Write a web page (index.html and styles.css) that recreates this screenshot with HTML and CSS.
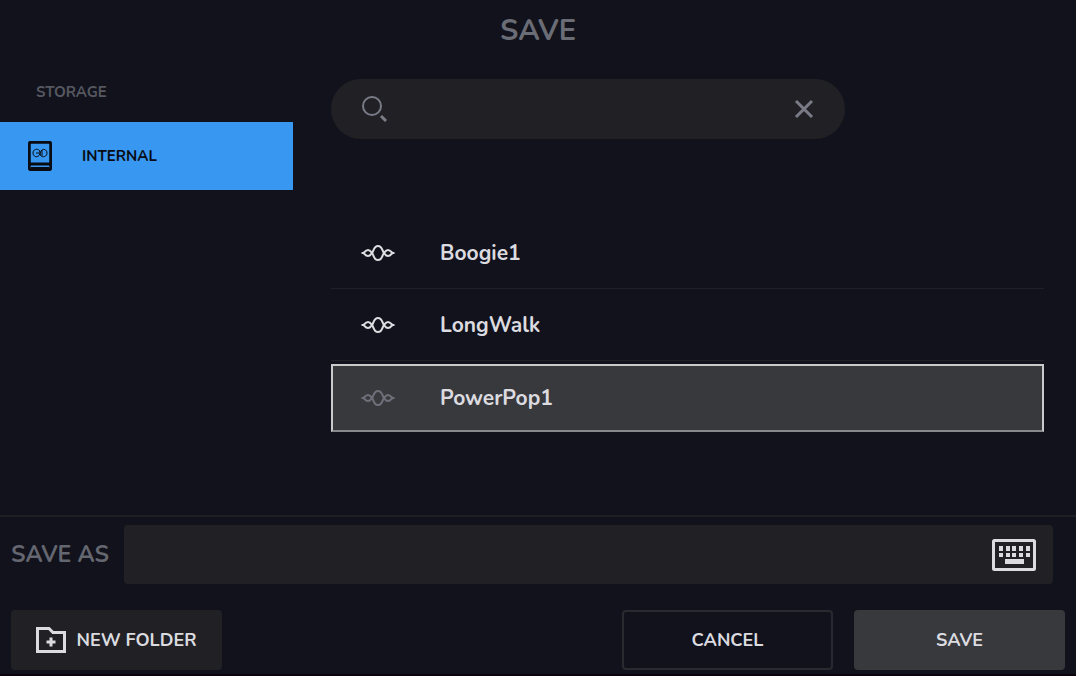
FILE: index.html
```html
<!DOCTYPE html>
<html lang="en">
<head>
  <meta charset="UTF-8" />
  <meta name="viewport" content="width=device-width, initial-scale=1" />
  <title>Save</title>
  <link rel="stylesheet" href="styles.css">
</head>
<body>

  <!-- shared wave icon -->
  <svg class="sprite" aria-hidden="true">
    <symbol id="wave" viewBox="0 0 34 18">
      <path d="M0.500 9H2.500M31.500 9H33.500M2.500 9C4 7.500 5 6 7 6C9.500 6 10 8 11 9C10 10 9.500 12 7 12C5 12 4 10.500 2.500 9ZM31.500 9C30 7.500 29 6 27 6C24.500 6 24 8 23 9C24 10 24.500 12 27 12C29 12 30 10.500 31.500 9ZM11 9C13 7 12.500 2 17 2C21.500 2 21 7 23 9C21 11 21.500 16 17 16C12.500 16 13 11 11 9Z"/>
    </symbol>
  </svg>

  <header class="header">
    <h1>SAVE</h1>
  </header>

  <main class="browser">
    <nav class="sidebar">
      <h2>STORAGE</h2>
      <button class="storage-item" type="button">
        <svg class="drive-icon" viewBox="0 0 24 30">
          <rect x="1.250" y="1.250" width="21.500" height="27.500" rx="2"/>
          <path d="M1 23H23"/>
          <path class="base" d="M3 28H21"/>
          <path class="loop" d="M11.500 9.500C9 7 5 8.500 5 12S9 17 11 14.500L13 10C15 7 19 8.500 19 12S15 17 12.500 14.500ZM8 12H11M14 9V15"/>
        </svg>
        <span>INTERNAL</span>
      </button>
    </nav>

    <section class="content">
      <form class="search" role="search">
        <svg class="search-icon" viewBox="0 0 26 26">
          <circle cx="10" cy="10" r="9"/>
          <path class="handle" d="M19 20L24 25"/>
        </svg>
        <input type="text" aria-label="Search" />
        <button class="clear-btn" type="button" aria-label="Clear search">
          <svg viewBox="0 0 20 20"><path d="M2 2L18 18M18 2L2 18"/></svg>
        </button>
      </form>

      <ul class="file-list">
        <li><button class="file" type="button"><svg class="wave-icon"><use href="#wave"/></svg><span>Boogie1</span></button></li>
        <li><button class="file" type="button"><svg class="wave-icon"><use href="#wave"/></svg><span>LongWalk</span></button></li>
        <li><button class="file selected" type="button"><svg class="wave-icon"><use href="#wave"/></svg><span>PowerPop1</span></button></li>
      </ul>
    </section>
  </main>

  <footer class="footer">
    <div class="save-as">
      <label for="filename">SAVE AS</label>
      <div class="name-box">
        <input id="filename" type="text" />
        <button class="keyboard-btn" type="button" aria-label="Keyboard">
          <svg viewBox="0 0 44 32">
            <rect class="frame" x="1.500" y="1.500" width="41" height="29" rx="1"/>
            <path d="M7 7h4v5H7zM14 7h4v5h-4zM20 7h4v5h-4zM27 7h4v5h-4zM34 7h4v5h-4zM7 14h4v4H7zM14 14h4v4h-4zM20 14h4v4h-4zM27 14h4v4h-4zM34 14h4v4h-4zM13 20h19v5H13z"/>
          </svg>
        </button>
      </div>
    </div>
    <div class="actions">
      <button class="btn btn-folder" type="button">
        <svg class="folder-icon" viewBox="0 0 30 26">
          <path d="M1.500 1.500H13L17 5.500H28.500V24.500H1.500Z"/>
          <path d="M15 10.500V19.500M10.500 15H19.500"/>
        </svg>
        <span>NEW FOLDER</span>
      </button>
      <button class="btn btn-cancel" type="button">CANCEL</button>
      <button class="btn btn-save" type="submit">SAVE</button>
    </div>
  </footer>

</body>
</html>
```
FILE: styles.css
```css
* {
  margin: 0;
  padding: 0;
  box-sizing: border-box;
}
body {
  min-height: 100vh;
  display: flex;
  flex-direction: column;
  background-color: #11121b;
  color: #dcdce0;
  font-family: Nunito, "Open Sans", sans-serif;
  border-bottom: 2px solid #0b020c;
}
button, input {
  font: inherit;
  color: inherit;
  background: none;
  border: none;
}
button {
  cursor: pointer;
}
input {
  outline: none;
  min-width: 0;
}
svg {
  display: block;
  fill: none;
  stroke: currentColor;
  stroke-width: 2;
}
.sprite {
  position: absolute;
  width: 0;
  height: 0;
}
.header {
  height: 62px;
  text-align: center;
}
.header h1 {
  font-size: 29px;
  line-height: 62px;
  font-weight: 700;
  color: #6a6c76;
}

.browser {
  flex: 1;
  display: flex;
}
.sidebar {
  width: 293px;
  flex-shrink: 0;
  padding-top: 20px;
}
.sidebar h2 {
  padding-left: 36px;
  margin-bottom: 20px;
  font-size: 15px;
  line-height: 20px;
  font-weight: 700;
  color: #565861;
}
.storage-item {
  width: 100%;
  height: 68px;
  padding-left: 28px;
  display: flex;
  align-items: center;
  gap: 30px;
  background-color: #3797f1;
  color: #080b12;
  font-size: 15px;
  font-weight: 700;
}
.drive-icon {
  width: 24px;
  height: 30px;
  stroke-width: 3;
}
.drive-icon .base {
  stroke-width: 4;
}
.drive-icon .loop {
  stroke-width: 1;
}

.content {
  flex: 1;
  padding: 17px 32px 0 38px;
}
.search {
  max-width: 514px;
  height: 60px;
  padding: 0 31px;
  display: flex;
  align-items: center;
  border-radius: 30px;
  background-color: #212125;
  color: #797c86;
}
.search input {
  flex: 1;
  height: 40px;
  padding: 0 12px;
  font-size: 20px;
}
.search-icon {
  width: 26px;
  height: 26px;
}
.search-icon .handle {
  stroke-width: 3;
}
.clear-btn svg {
  width: 20px;
  height: 20px;
  stroke-width: 3;
}
.file-list {
  margin-top: 78px;
  list-style: none;
}
.file-list li {
  height: 72px;
  border-bottom: 1px solid #202126;
}
.file-list li:last-child {
  padding-top: 3px;
  border-bottom: none;
}
.file {
  width: 100%;
  height: 72px;
  padding-left: 29px;
  display: flex;
  align-items: center;
  gap: 45px;
  font-size: 21px;
  font-weight: 700;
  border: 1px solid transparent;
}
.file.selected {
  height: 68px;
  border: 2px solid #c9cacc;
  border-bottom-color: #87888c;
  background-color: #38393d;
  padding-left: 28px;
}
.wave-icon {
  width: 34px;
  height: 18px;
}
.selected .wave-icon {
  color: #6d7079;
}

.footer {
  border-top: 2px solid #1e1f23;
  padding: 8px 11px 4px;
}
.save-as {
  display: flex;
  align-items: center;
  margin-right: 12px;
}
.save-as label {
  width: 113px;
  flex-shrink: 0;
  font-size: 23px;
  font-weight: 700;
  color: #646670;
}
.name-box {
  flex: 1;
  height: 59px;
  padding-right: 17px;
  display: flex;
  align-items: center;
  border-radius: 4px;
  background-color: #212125;
}
.name-box input {
  flex: 1;
  height: 100%;
  padding: 0 16px;
  font-size: 20px;
}
.keyboard-btn svg {
  width: 44px;
  height: 32px;
  fill: currentColor;
  stroke: none;
}
.keyboard-btn .frame {
  fill: none;
  stroke: currentColor;
  stroke-width: 3;
}
.actions {
  display: flex;
  gap: 21px;
  margin-top: 26px;
}
.btn {
  width: 211px;
  height: 60px;
  display: flex;
  align-items: center;
  justify-content: center;
  border-radius: 4px;
  font-size: 18px;
  font-weight: 700;
}
.btn-folder {
  gap: 10px;
  margin-right: auto;
  background-color: #212125;
}
.folder-icon {
  width: 30px;
  height: 26px;
  stroke-width: 3;
}
.btn-cancel {
  border: 2px solid #292a2f;
}
.btn-save {
  background-color: #38393d;
}
```
